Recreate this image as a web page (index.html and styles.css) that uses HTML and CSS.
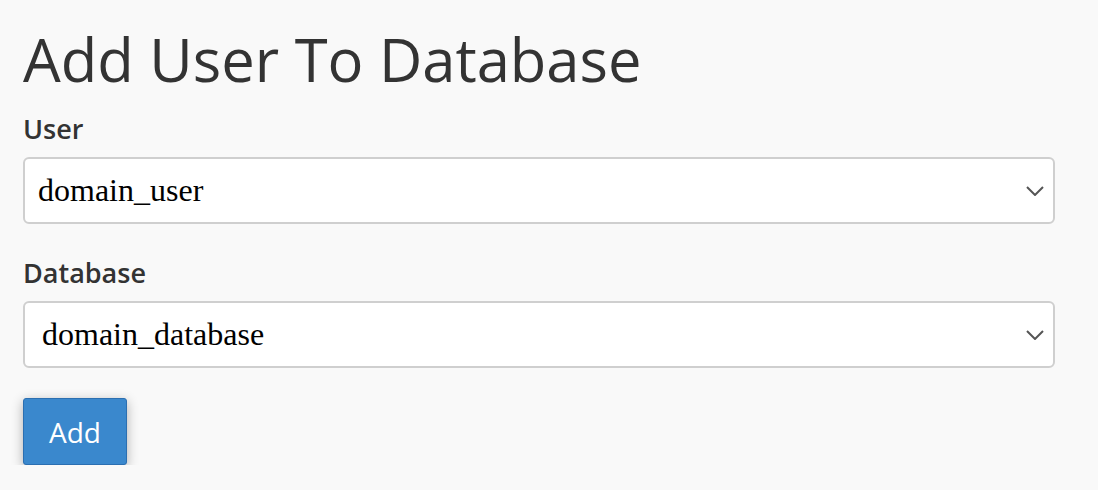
FILE: index.html
```html
<!DOCTYPE html>
<html lang="en">
<head>
<meta charset="utf-8">
<title>Add User To Database</title>
<link rel="stylesheet" href="styles.css">
</head>
<body>
<main class="page">
  <h1 class="title">Add User To Database</h1>
  <div class="field">
    <label class="field-label">User</label>
    <div class="select">
      <span class="select-value">domain_user</span>
      <svg class="chevron" width="18" height="10" viewBox="0 0 18 10" aria-hidden="true"><path d="M1 1 L9 9 L17 1" fill="none" stroke="#555" stroke-width="2"/></svg>
    </div>
  </div>
  <div class="field">
    <label class="field-label">Database</label>
    <div class="select select-db">
      <span class="select-value">domain_database</span>
      <svg class="chevron" width="18" height="10" viewBox="0 0 18 10" aria-hidden="true"><path d="M1 1 L9 9 L17 1" fill="none" stroke="#555" stroke-width="2"/></svg>
    </div>
  </div>
  <button class="btn-add" type="button">Add</button>
</main>
</body>
</html>
```
FILE: styles.css
```css
html, body {
  margin: 0;
  padding: 0;
  background: #f9f9f9;
}
.page {
  padding: 23px 43px 0 23px;
  font-family: "Open Sans", "Liberation Sans", sans-serif;
  color: #333;
}
.title {
  margin: 0;
  font-size: 59.7px;
  font-weight: 400;
  line-height: 72px;
  color: #333;
}
.field {
  display: flex;
  flex-direction: column;
  margin-top: 16px;
}
.field + .field {
  margin-top: 31px;
}
.field-label {
  font-size: 27px;
  font-weight: 600;
  line-height: 36px;
  margin-bottom: 10px;
  color: #333;
}
.select {
  box-sizing: border-box;
  height: 67px;
  display: flex;
  align-items: center;
  justify-content: space-between;
  padding: 0 9px 0 13px;
  background: #fff;
  border: 2px solid #cfcfcf;
  border-radius: 6px;
}
.select-db {
  padding-left: 17px;
}
.select-value {
  font-family: "Liberation Serif", "Times New Roman", serif;
  font-size: 32px;
  color: #000;
  line-height: 37px;
}
.chevron {
  display: block;
}
.btn-add {
  margin-top: 30px;
  height: 67px;
  padding: 0 25px;
  font-family: "Open Sans", "Liberation Sans", sans-serif;
  font-size: 28px;
  color: #fff;
  background: #3a88cd;
  border: 1px solid #2b6fb1;
  border-radius: 3px;
  box-shadow: 0 3px 12px rgba(0, 0, 0, 0.3);
}
```
